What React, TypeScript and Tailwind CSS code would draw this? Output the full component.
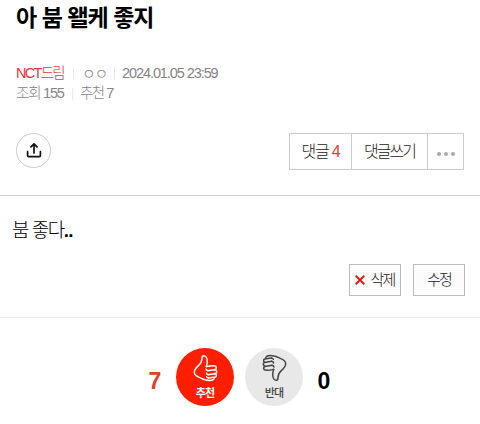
import React from 'react';

const Divider = () => <span className="mx-[7px] h-3 w-px bg-[#e6eaed]" />;

const ShareIcon = () => (
  <svg className="h-4 w-4" viewBox="0 0 16 16" fill="none" stroke="#111" strokeWidth={1.7} strokeLinecap="round" strokeLinejoin="round">
    <path d="M8 10V1.2M5 3.8 8 .8l3 3" />
    <path d="M1.6 8.6v4q0 1 1 1h10.8q1 0 1-1v-4" />
  </svg>
);

const ThumbIcon = ({ className }: { className: string }) => (
  <svg className={className} viewBox="0 0 108 108" fill="none" stroke="currentColor" strokeWidth={4.4} strokeLinecap="round" strokeLinejoin="round">
    <path d="M55 50c3-10 4-19 1-26-2-5-4-7-8-7-5 0-6 4-6 8 0 10-3 15-10 21-9 8-14 13-13 22 1 8 7 11 15 14 7 3 12 7 20 8 9 2 17 2 21-1" />
    <path d="M55 50q11-3 21-3c6 0 9 3 9 6s-3 6-8 6l-17 3M77 59c6 0 9 2 9 6 0 3-3 6-8 6l-17 3M78 71c5 0 8 2 7 6 0 3-3 5-8 5l-15 2M77 82q4 4-2 7" />
    <path d="M60 62q-5-1-6-5M61 74q-5-1-6-5M62 84q-5-1-6-4" />
  </svg>
);

const App: React.FC = () => {
  return (
    <div className="h-[424px] w-[480px] overflow-hidden bg-white font-['Liberation_Sans','Noto_Sans_CJK_KR',sans-serif] text-[#333]">
      <header className="flex h-[196px] flex-col border-b border-[#d0d0d0] px-4">
        <h1 className="h-[34px] text-[23px] leading-[36px] font-bold tracking-[-0.95px] text-black">아 붐 왤케 좋지</h1>
        <div className="mt-[30px] flex h-5 items-center text-[15px] font-light tracking-[-1.3px] whitespace-nowrap text-[#858585]">
          <span className="w-[50px] text-[14.5px] tracking-[-1.7px] text-[#e8373e]">NCT드림</span>
          <Divider />
          <span className="w-[26px] pl-px">ㅇㅇ</span>
          <Divider />
          <span className="text-[14.5px] tracking-[-1.08px]">2024.01.05 23:59</span>
        </div>
        <div className="flex h-5 items-center text-[14.5px] font-light whitespace-nowrap text-[#858585]">
          <span className="w-[49px] tracking-[-1.2px]">조회 155</span>
          <Divider />
          <span className="tracking-[-1.5px]">추천 7</span>
        </div>
        <div className="mt-[29px] flex items-start justify-between">
          <button className="flex h-[35px] w-[35px] items-center justify-center rounded-full border border-[#ccc]">
            <ShareIcon />
          </button>
          <div className="flex h-[37px] border border-[#ccc] text-[16px] font-light tracking-[-1.2px] text-[#222]">
            <button className="w-[62px] border-r border-[#ccc] whitespace-nowrap">
              댓글 <span className="text-[#e8373e]">4</span>
            </button>
            <button className="w-[76px] border-r border-[#ccc] tracking-[-2px] whitespace-nowrap">댓글쓰기</button>
            <button className="flex w-[35px] items-center justify-center gap-[3px] pt-1">
              <i className="h-1 w-1 rounded-full bg-[#aaa]" />
              <i className="h-1 w-1 rounded-full bg-[#aaa]" />
              <i className="h-1 w-1 rounded-full bg-[#aaa]" />
            </button>
          </div>
        </div>
      </header>

      <section className="h-[122px] border-b border-[#ebebeb] pr-[15px] pl-3">
        <p className="pt-5 text-[19px] leading-[29px] font-light tracking-[-1.5px] text-black">
          붐 좋다<span className="font-bold tracking-[-0.8px]">..</span>
        </p>
        <div className="mt-[19px] flex justify-end gap-3 text-[15px] font-light tracking-[-1.8px] text-[#222]">
          <button className="flex h-8 w-[52px] items-center justify-center gap-[5px] border border-[#bbb] bg-[#fcfcfc]">
            <svg className="h-[10px] w-[10px]" viewBox="0 0 10 10" stroke="#e21a1a" strokeWidth={2}>
              <path d="M.7.7l8.6 8.6M9.3.7.7 9.3" />
            </svg>
            삭제
          </button>
          <button className="h-8 w-[52px] border border-[#bbb] bg-[#fcfcfc]">수정</button>
        </div>
      </section>

      <div className="flex items-center pt-[30px] pl-[147px] text-[23px] font-bold">
        <span className="w-4 pt-2 text-center text-[#e1402c]">7</span>
        <button className="ml-[13px] flex h-[58px] w-[58px] flex-col items-center rounded-full bg-[#ff1e00] pt-[2px] text-white">
          <ThumbIcon className="ml-[2px] h-9 w-9 shrink-0" />
          <span className="-mt-px text-[11px] leading-4 tracking-[-0.8px]">추천</span>
        </button>
        <button className="ml-[11px] flex h-[58px] w-[58px] flex-col items-center rounded-full bg-[#e8e8e8] pt-[2px] text-[#444]">
          <ThumbIcon className="h-9 w-9 shrink-0 rotate-180" />
          <span className="-mt-px text-[11px] leading-4 font-medium tracking-[-0.8px]">반대</span>
        </button>
        <span className="ml-[13px] w-4 pt-2 text-center text-black">0</span>
      </div>
    </div>
  );
};

export default App;
